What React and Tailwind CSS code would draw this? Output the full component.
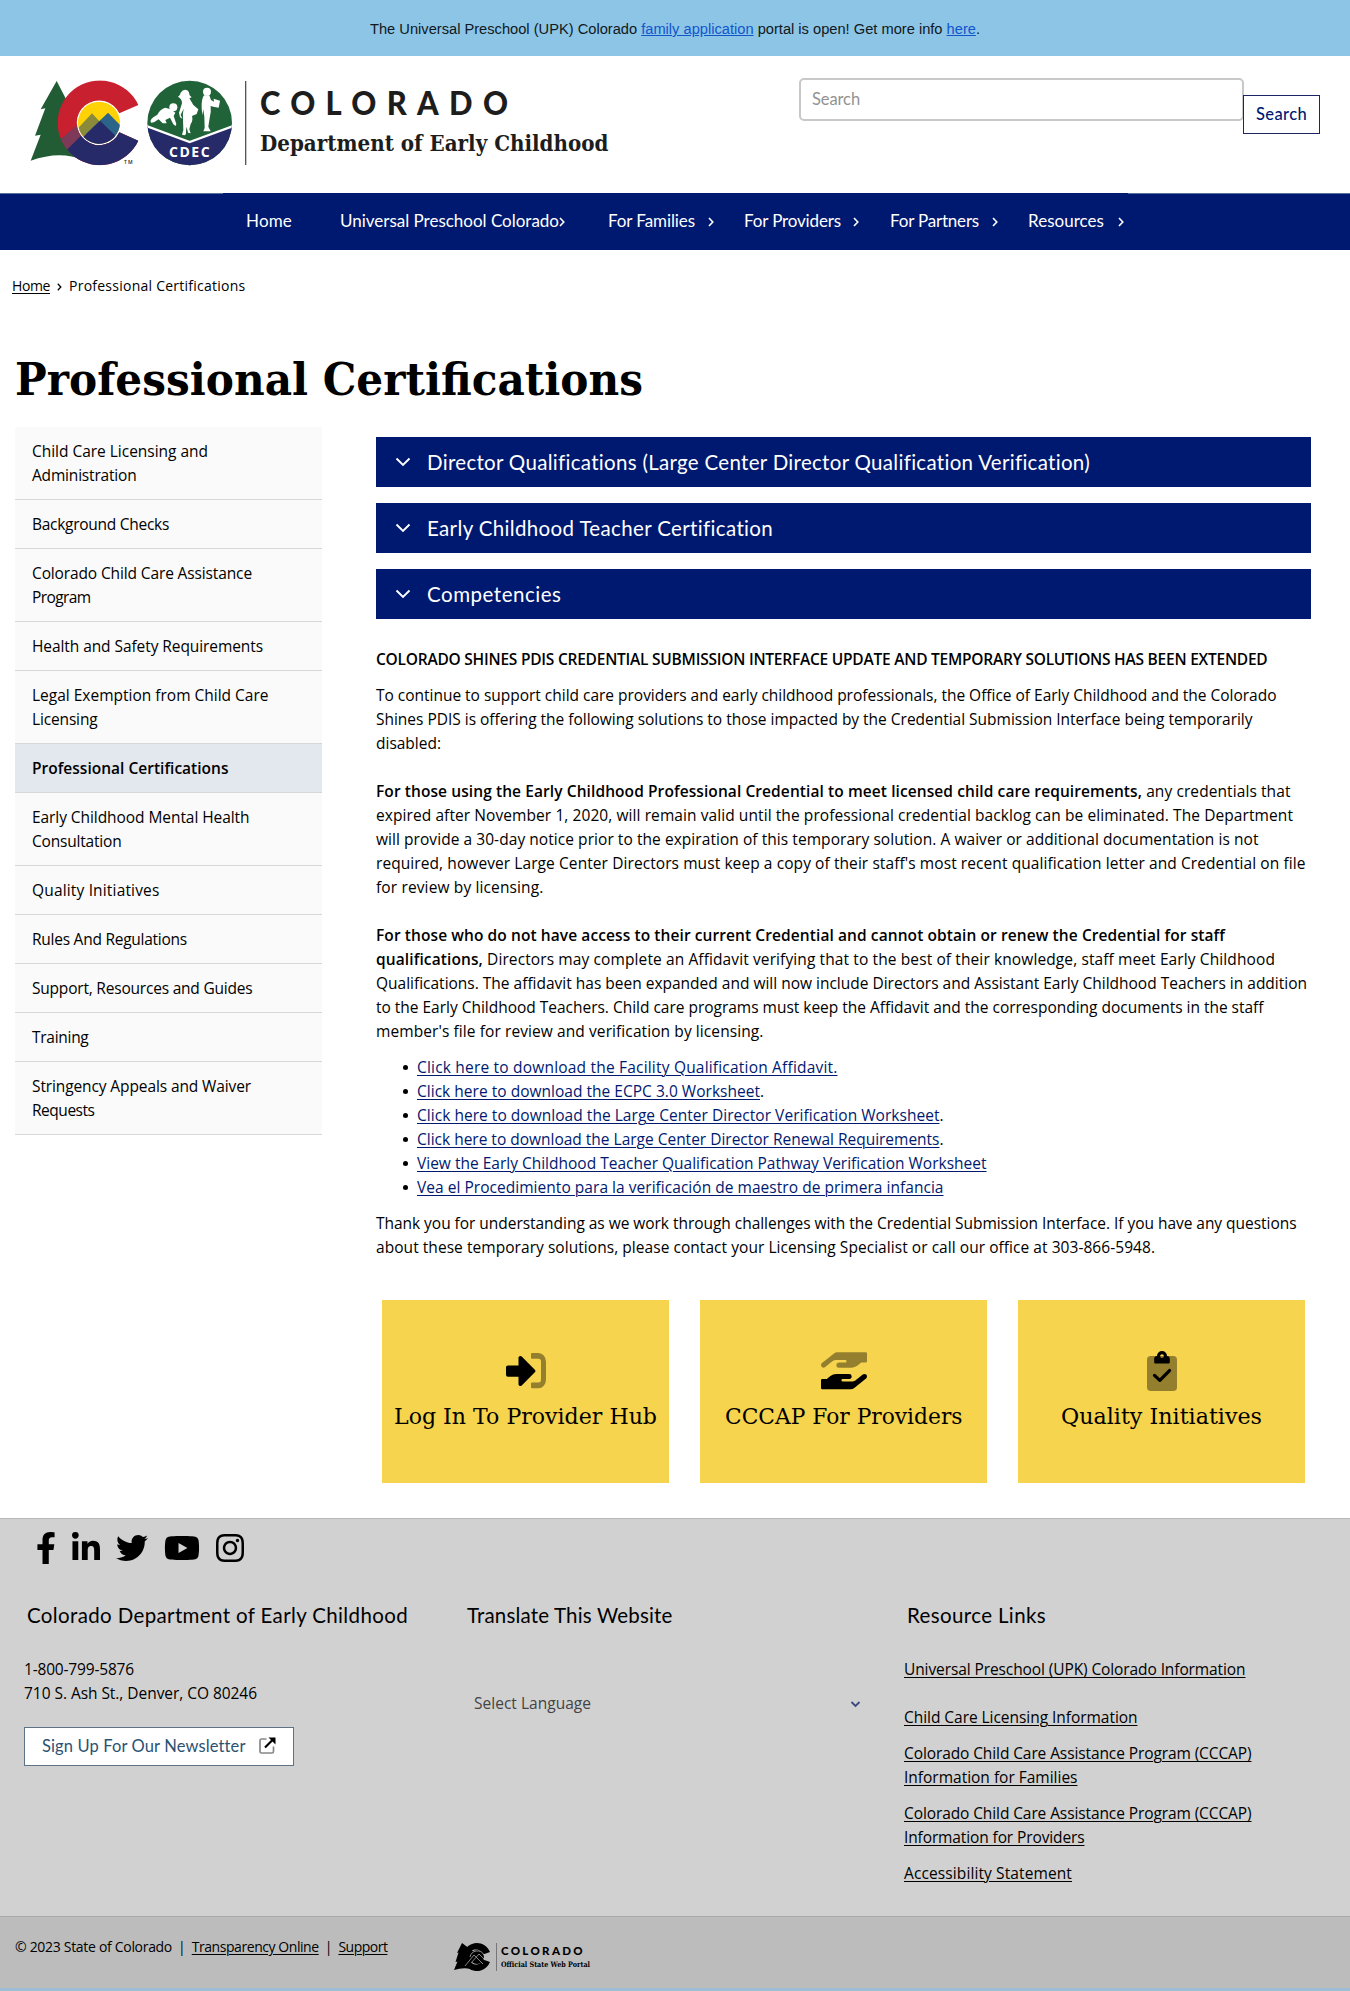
import React, { useLayoutEffect, useRef } from "react";
import { FaFacebookF, FaLinkedinIn, FaTwitter, FaYoutube, FaInstagram } from "react-icons/fa";

// Sets a run of text to an exact width, by tracking or by condensing the face.
function Fit({ w, squeeze = false, className = "", children }) {
  const ref = useRef(null);
  useLayoutEffect(() => {
    const el = ref.current;
    el.style.letterSpacing = "0px";
    el.style.transform = "none";
    const natural = el.getBoundingClientRect().width;
    if (squeeze) el.style.transform = `scaleX(${w / natural})`;
    else el.style.letterSpacing = `${(w - natural) / el.textContent.length}px`;
  }, [w, squeeze]);
  return (
    <span className="inline-block align-top" style={{ width: w }}>
      <span ref={ref} className={`inline-block origin-left whitespace-nowrap ${className}`}>
        {children}
      </span>
    </span>
  );
}

function Lines({ rows, className = "" }) {
  return (
    <span className="flex flex-col">
      {rows.map(([text, w], i) => (
        <Fit key={i} w={w} className={className}>{text}</Fit>
      ))}
    </span>
  );
}

const B = ({ children }) => <b className="font-semibold">{children}</b>;

function Logo() {
  return (
    <svg className="h-[110px] w-[230px]" viewBox="0 0 690 330">
      <defs>
        <clipPath id="c-ring"><path d="M355 105A127 127 0 1 0 355 212L298 187A67 67 0 1 1 298 130Z" /></clipPath>
        <clipPath id="c-sun"><circle cx="237" cy="158" r="63" /></clipPath>
        <clipPath id="c-seal"><circle cx="509" cy="159" r="127" /></clipPath>
      </defs>
      <path d="M110 33L62 118L76 115L45 197L62 194L32 272Q120 240 190 270L210 150L150 110Z" fill="#215c34" />
      <circle cx="237" cy="158" r="69" fill="#fff" />
      <g clipPath="url(#c-ring)">
        <rect x="100" y="20" width="270" height="280" fill="#c9202f" />
        <path d="M100 225L220 125L300 220L150 300Z" fill="#7c3a58" />
        <path d="M125 255L240 140L370 180V300H160Z" fill="#262a68" />
      </g>
      <g clipPath="url(#c-sun)">
        <rect x="170" y="90" width="140" height="140" fill="#fed204" />
        <path d="M160 190L216 130L290 210V240H160Z" fill="#8a8a3a" />
        <path d="M200 190L264 128L320 185V240H190Z" fill="#2b6488" />
        <path d="M160 230L240 152L320 230Z" fill="#262a68" />
      </g>
      <g clipPath="url(#c-seal)">
        <rect x="380" y="30" width="260" height="260" fill="#216338" />
        <path d="M370 165L509 216L648 165V300H370Z" fill="#262a68" />
        <path d="M370 165L509 216L648 165" fill="none" stroke="#fff" strokeWidth="7" />
      </g>
      <g fill="#fff">
        <circle cx="460" cy="112" r="12" />
        <path d="M452 118L436 113Q420 118 412 134L400 142Q388 152 393 158L402 157L416 148L428 160H440L436 150L450 143L460 163L467 168L469 162L461 138L466 128Z" />
        <path d="M474 80Q480 77 482 68Q490 56 502 61Q509 66 509 76L515 82L508 85Q514 95 520 105L535 118L530 132L516 138Q520 152 512 162L508 178L512 190L504 188L500 170L498 182Q500 192 494 196L486 194L490 180L489 150Q487 132 491 116L482 134L487 146L480 142L477 128L486 100Q486 86 474 80Z" />
        <circle cx="561" cy="65" r="12" />
        <path d="M552 76H568L573 90L582 95L581 86L600 92L596 113L580 110L572 108Q574 126 569 144L565 170L572 184H550L554 174L553 140L550 118L547 136L545 114Q544 86 552 76Z" />
      </g>
      <text x="447" y="260" textLength="122" fontSize="42" fontWeight="700" fill="#fff" className="font-['Open_Sans',sans-serif]">CDEC</text>
      <text x="312" y="283" textLength="26" fontSize="15" fontWeight="600" fill="#222" className="font-['Open_Sans',sans-serif]">TM</text>
      <rect x="675" y="33" width="4" height="252" fill="#555" />
    </svg>
  );
}

const NAV = [
  ["Home", "ml-[246px]", 46, ""],
  ["Universal Preschool Colorado", "ml-[48px]", 219, "ml-0"],
  ["For Families", "ml-[43px]", 87, "ml-[13px]"],
  ["For Providers", "ml-[30px]", 97, "ml-[12px]"],
  ["For Partners", "ml-[31px]", 89, "ml-[13px]"],
  ["Resources", "ml-[30px]", 76, "ml-[14px]"],
];

const SIDE = [
  [["Child Care Licensing and", 176], ["Administration", 104.5]],
  [["Background Checks", 137]],
  [["Colorado Child Care Assistance", 220], ["Program", 58.5]],
  [["Health and Safety Requirements", 231]],
  [["Legal Exemption from Child Care", 236.5], ["Licensing", 65.5]],
  [["Professional Certifications", 196.5]],
  [["Early Childhood Mental Health", 217.5], ["Consultation", 89.5]],
  [["Quality Initiatives", 127.5]],
  [["Rules And Regulations", 155]],
  [["Support, Resources and Guides", 220.5]],
  [["Training", 56.5]],
  [["Stringency Appeals and Waiver", 219], ["Requests", 62.5]],
];

const ACC = [
  ["Director Qualifications (Large Center Director Qualification Verification)", 663],
  ["Early Childhood Teacher Certification", 346.5],
  ["Competencies", 134.5],
];

const P1 = [
  ["To continue to support child care providers and early childhood professionals, the Office of Early Childhood and the Colorado", 900.5],
  ["Shines PDIS is offering the following solutions to those impacted by the Credential Submission Interface being temporarily", 876.5],
  ["disabled:", 65],
];
const P2 = [
  [<><B>For those using the Early Childhood Professional Credential to meet licensed child care requirements,</B> any credentials that</>, 914.5],
  ["expired after November 1, 2020, will remain valid until the professional credential backlog can be eliminated. The Department", 917],
  ["will provide a 30-day notice prior to the expiration of this temporary solution. A waiver or additional documentation is not", 882.5],
  ["required, however Large Center Directors must keep a copy of their staff's most recent qualification letter and Credential on file", 929.5],
  ["for review by licensing.", 167.5],
];
const P3 = [
  [<B>For those who do not have access to their current Credential and cannot obtain or renew the Credential for staff</B>, 849],
  [<><B>qualifications,</B> Directors may complete an Affidavit verifying that to the best of their knowledge, staff meet Early Childhood</>, 899],
  ["Qualifications. The affidavit has been expanded and will now include Directors and Assistant Early Childhood Teachers in addition", 931],
  ["to the Early Childhood Teachers. Child care programs must keep the Affidavit and the corresponding documents in the staff", 887.5],
  ["member's file for review and verification by licensing.", 387.5],
];
const P4 = [
  ["Thank you for understanding as we work through challenges with the Credential Submission Interface. If you have any questions", 920.5],
  ["about these temporary solutions, please contact your Licensing Specialist or call our office at 303-866-5948.", 779],
];
const DOCS = [
  ["Click here to download the Facility Qualification Affidavit.", 420.5, ""],
  ["Click here to download the ECPC 3.0 Worksheet", 343, "."],
  ["Click here to download the Large Center Director Verification Worksheet", 522.5, "."],
  ["Click here to download the Large Center Director Renewal Requirements", 522.5, "."],
  ["View the Early Childhood Teacher Qualification Pathway Verification Worksheet", 569.5, ""],
  ["Vea el Procedimiento para la verificación de maestro de primera infancia", 526.5, ""],
];

const LoginIcon = () => (
  <svg className="h-10 w-10" viewBox="0 0 512 512">
    <path d="M416 448h-84a12 12 0 0 1-12-12v-40a12 12 0 0 1 12-12h84a32 32 0 0 0 32-32V160a32 32 0 0 0-32-32h-84a12 12 0 0 1-12-12V76a12 12 0 0 1 12-12h84a96 96 0 0 1 96 96v192a96 96 0 0 1-96 96z" opacity=".4" transform="matrix(1 0 0 1.180 0 -51)" />
    <path d="M369 273L201 441c-15 15-41 4.500-41-17v-96H24a24 24 0 0 1-24-24v-96a24 24 0 0 1 24-24h136V88c0-21 26-32 41-17l168 168a24 24 0 0 1 0 34z" />
  </svg>
);
const HANDS_PATH = "M565 228c-12-11-30-10-42 0l-93 74a64 64 0 0 1-40 14H272a16 16 0 0 1 0-32h78c16 0 31-11 33-27a32 32 0 0 0-31-37H192a117 117 0 0 0-74 26l-46 38H16a16 16 0 0 0-16 16v96a16 16 0 0 0 16 16h357a64 64 0 0 0 40-14l151-121a32 32 0 0 0 1-49z";
const HandsIcon = () => (
  <svg className="h-10 w-[46px]" viewBox="0 0 576 500">
    <path d={HANDS_PATH} opacity=".4" transform="rotate(180 288 240) translate(0 52)" />
    <path d={HANDS_PATH} transform="translate(0 67)" />
  </svg>
);
const ClipIcon = () => (
  <svg className="h-10 w-[30px]" viewBox="0 0 384 512">
    <rect y="64" width="384" height="448" rx="48" opacity=".4" />
    <path fillRule="evenodd" d="M256 64a64 64 0 0 0-128 0c-20 0-36 16-36 36v44a16 16 0 0 0 16 16h168a16 16 0 0 0 16-16v-44c0-20-16-36-36-36zm-64 24a24 24 0 1 1 0-48 24 24 0 0 1 0 48z" />
    <path d="M96 312L164 376L288 250" fill="none" stroke="#000" strokeWidth="42" strokeLinecap="round" strokeLinejoin="round" />
  </svg>
);
const CARDS = [
  ["Log In To Provider Hub", 263, LoginIcon],
  ["CCCAP For Providers", 237.5, HandsIcon],
  ["Quality Initiatives", 201, ClipIcon],
];

const LINKS = [
  [[["Universal Preschool (UPK) Colorado Information", 341.5]], "mb-6"],
  [[["Child Care Licensing Information", 233.5]], "mb-3"],
  [[["Colorado Child Care Assistance Program (CCCAP)", 347.5], ["Information for Families", 173.5]], "mb-3"],
  [[["Colorado Child Care Assistance Program (CCCAP)", 347.5], ["Information for Providers", 180.5]], "mb-3"],
  [[["Accessibility Statement", 168]], ""],
];

const UL = "underline decoration-1 underline-offset-2";

export default function App() {
  return (
    <div className="flex h-[1991px] w-[1350px] flex-col overflow-hidden bg-white font-['Open_Sans',sans-serif] text-[15.500px] leading-6 text-black">
      <div className="flex h-14 shrink-0 items-start justify-center bg-[#8dc5e7] pt-[17px] font-['Liberation_Sans',sans-serif] text-[14.667px] text-[#101820]">
        <Fit w={610}>
          The Universal Preschool (UPK) Colorado <a className="text-[#1155cc] underline">family application</a> portal is open! Get more info <a className="text-[#1155cc] underline">here</a>.
        </Fit>
      </div>

      <header className="flex h-[137px] shrink-0 pl-5">
        <div className="pt-[14px]"><Logo /></div>
        <div className="flex flex-col pl-[9px] pt-[29px] text-[#1d1d1d]">
          <span className="pl-px font-['Lato',sans-serif] text-[33px] font-black leading-[34px]">
            <Fit w={248} squeeze className="tracking-[9px]"><span className="tracking-[11px]">COLORAD</span>O</Fit>
          </span>
          <span className="mt-[9px] pl-px font-['DejaVu_Serif',serif] text-[21.500px] font-bold leading-8"><Fit w={348.500} squeeze>Department of Early Childhood</Fit></span>
        </div>
        <div className="ml-auto mr-[30px] flex font-['Lato',sans-serif] text-[16.500px]">
          <div className="mt-[22px] h-[43px] w-[445px] rounded-[5px] border-2 border-[#c8c8c8] pl-[11px] pt-[7px] text-[#929292]">
            <Fit w={48}>Search</Fit>
          </div>
          <div className="-ml-px mt-[39px] h-[39px] w-[77px] border border-[#1d2566] bg-white pl-[12px] pt-[6px] font-medium text-[#001970]">
            <Fit w={51}>Search</Fit>
          </div>
        </div>
      </header>

      <nav className="flex h-[57px] shrink-0 flex-col bg-[#001970] font-['Lato',sans-serif] text-[17px] text-white">
        <div className="flex h-px justify-between">
          <span className="w-[223px] bg-[#55709b]" />
          <span className="w-[222px] bg-[#55709b]" />
        </div>
        <div className="flex pt-[15px]">
          {NAV.map(([t, ml, w, cm]) => (
            <div key={t} className={`flex items-center ${ml}`}>
              <Fit w={w}>{t}</Fit>
              {cm && (
                <svg className={`mt-[2px] h-[10px] w-[6px] ${cm}`} viewBox="0 0 6 10"><path d="M1 1L4.800 5L1 9" fill="none" stroke="#fff" strokeWidth="1.600" /></svg>
              )}
            </div>
          ))}
        </div>
      </nav>

      <div className="flex shrink-0 pl-3 pt-6 text-[14px]">
        <a><Fit w={38} className={UL}>Home</Fit></a>
        <svg className="ml-[7px] mr-[7px] mt-[9px] h-2 w-[5px]" viewBox="0 0 5 8"><path d="M.8.8L3.800 4L.8 7.200" fill="none" stroke="#000" strokeWidth="1.300" /></svg>
        <Fit w={176.500}>Professional Certifications</Fit>
      </div>

      <h1 className="mt-[52px] h-[77px] shrink-0 pl-[15px] pt-[2px] font-['DejaVu_Serif',serif] text-[45px] font-bold leading-[56px]">
        <Fit w={628} squeeze>Professional Certifications</Fit>
      </h1>

      <main className="flex h-[1091px] shrink-0 pl-[15px]">
        <aside className="w-[307px]">
          {SIDE.map((rows, i) => (
            <div key={i} className={i === 5 ? "border-b border-[#d8d8d8] bg-[#e3e7ee] py-3 pl-[17px] font-semibold" : "border-b border-[#d8d8d8] bg-[#fafafa] py-3 pl-[17px]"}>
              <Lines rows={rows} />
            </div>
          ))}
        </aside>

        <section className="ml-[54px] flex w-[935px] flex-col pt-[10px]">
          {ACC.map(([t, w]) => (
            <div key={t} className="mb-4 flex h-[50px] w-[935px] items-center bg-[#001970] pl-[19px] font-['Lato',sans-serif] text-[20.500px] text-white">
              <svg className="mr-[16px] h-[10px] w-4" viewBox="0 0 16 10"><path d="M1.500 1.500L8 8L14.500 1.500" fill="none" stroke="#fff" strokeWidth="1.900" /></svg>
              <Fit w={w}>{t}</Fit>
            </div>
          ))}
          <p className="mt-[12px] font-semibold"><Fit w={891.500}>COLORADO SHINES PDIS CREDENTIAL SUBMISSION INTERFACE UPDATE AND TEMPORARY SOLUTIONS HAS BEEN EXTENDED</Fit></p>
          <div className="mt-3"><Lines rows={P1} /></div>
          <div className="mt-6"><Lines rows={P2} /></div>
          <div className="mt-6"><Lines rows={P3} /></div>
          <ul className="mt-3 pl-[27px]">
            {DOCS.map(([t, w, end]) => (
              <li key={t} className="flex">
                <span className="mr-[9px] mt-[10px] h-[5px] w-[5px] rounded-full bg-black" />
                <a className="text-[#001970]"><Fit w={w} className={UL}>{t}</Fit></a>{end}
              </li>
            ))}
          </ul>
          <div className="mt-3"><Lines rows={P4} /></div>
          <div className="mt-[41px] flex gap-[31px] pl-[6px]">
            {CARDS.map(([t, w, Icon]) => (
              <div key={t} className="flex h-[183px] w-[287px] flex-col items-center bg-[#f6d44d] pt-[51px]">
                <Icon />
                <span className="mt-[10px] font-['DejaVu_Serif',serif] text-[22px] leading-8"><Fit w={w} squeeze>{t}</Fit></span>
              </div>
            ))}
          </div>
        </section>
      </main>

      <footer className="flex h-[398px] shrink-0 flex-col border-t border-[#b9b9b9] bg-[#d1d1d1]">
        <div className="flex h-[77px] gap-4 pl-[35.500px] pt-[13px]">
          <FaFacebookF className="h-8 w-5" />
          <FaLinkedinIn className="h-8 w-7" />
          <FaTwitter className="h-8 w-8" />
          <FaYoutube className="h-8 w-9" />
          <FaInstagram className="h-8 w-7" />
        </div>
        <div className="flex">
          <div className="w-[440px] pl-6">
            <h2 className="h-[61px] pl-[3px] pt-[7px] font-['Lato',sans-serif] text-[20.500px]"><Fit w={381}>Colorado Department of Early Childhood</Fit></h2>
            <Lines rows={[["1-800-799-5876", 110], ["710 S. Ash St., Denver, CO 80246", 233]]} />
            <div className="mt-[22px] flex h-[39px] w-[270px] border border-[#5f7386] bg-white pl-[17px] pt-[6px] font-['Lato',sans-serif] text-[16.500px] text-[#2b5273]">
              <Fit w={203}>Sign Up For Our Newsletter</Fit>
              <svg className="ml-[14px] mt-[3px] h-[17px] w-[17px]" viewBox="0 0 17 17" fill="none">
                <path d="M7.500 2H2.500Q1 2 1 3.500V14.500Q1 16 2.500 16H13Q14.500 16 14.500 14.500V9.500" stroke="#888" strokeWidth="1.700" />
                <path d="M6 10.500L14 2.500" stroke="#000" strokeWidth="2.200" />
                <path d="M9.500 .5H16.500V7.500Z" fill="#000" />
              </svg>
            </div>
          </div>
          <div className="w-[464px] pl-[27px]">
            <h2 className="h-[95px] pt-[7px] font-['Lato',sans-serif] text-[20.500px]"><Fit w={205.500}>Translate This Website</Fit></h2>
            <div className="flex items-center pl-[7px] text-[#444]">
              <Fit w={117}>Select Language</Fit>
              <svg className="ml-[259px] mt-[2px] h-[7px] w-[11px]" viewBox="0 0 11 7"><path d="M1.500 1L5.500 5L9.500 1" fill="none" stroke="#3a4a80" strokeWidth="1.800" /></svg>
            </div>
          </div>
          <div>
            <h2 className="h-[61px] pl-[3px] pt-[7px] font-['Lato',sans-serif] text-[20.500px]"><Fit w={139}>Resource Links</Fit></h2>
            {LINKS.map(([rows, mb], i) => (
              <div key={i} className={mb}><Lines rows={rows} className={UL} /></div>
            ))}
          </div>
        </div>
      </footer>

      <div className="flex h-[72px] shrink-0 border-t border-[#a9a9a9] bg-[#bcbcbc] pl-[15px] text-[14px]">
        <div className="flex w-[439px] pt-[18px]">
          <Fit w={157}>© 2023 State of Colorado</Fit>
          <span className="ml-[6px] mr-[6px]">|</span>
          <Fit w={127} className={UL}>Transparency Online</Fit>
          <span className="ml-[6px] mr-[6px]">|</span>
          <Fit w={49} className={UL}>Support</Fit>
        </div>
        <svg className="mt-[25px] h-[30px] w-[44px]" viewBox="0 0 44 30">
          <path d="M8 1L3 11L4.500 10.600L1.500 20L3.500 19.600L0 28Q9 25 17 27L20 10Z" />
          <path d="M36 10A14 14 0 1 0 36 20L29 17.500A7.500 7.500 0 1 1 29 12.500Z" />
          <circle cx="23" cy="15" r="7" />
          <path d="M11 24L20 13L29 22M17 21L25 12L30 17M16 15A7.500 7.500 0 0 1 30 13" fill="none" stroke="#bcbcbc" strokeWidth=".7" />
          <path d="M42.500 1V29" stroke="#666" strokeWidth=".8" />
        </svg>
        <div className="ml-[3px] flex flex-col pt-[28px]">
          <span className="font-['Lato',sans-serif] text-[11.500px] font-black leading-3"><Fit w={84}>COLORADO</Fit></span>
          <span className="mt-[2px] font-['DejaVu_Serif',serif] text-[7.500px] font-bold leading-3"><Fit w={89} squeeze>Official State Web Portal</Fit></span>
        </div>
      </div>
      <div className="h-[3px] shrink-0 bg-[#9fbdd6]" />
    </div>
  );
}
